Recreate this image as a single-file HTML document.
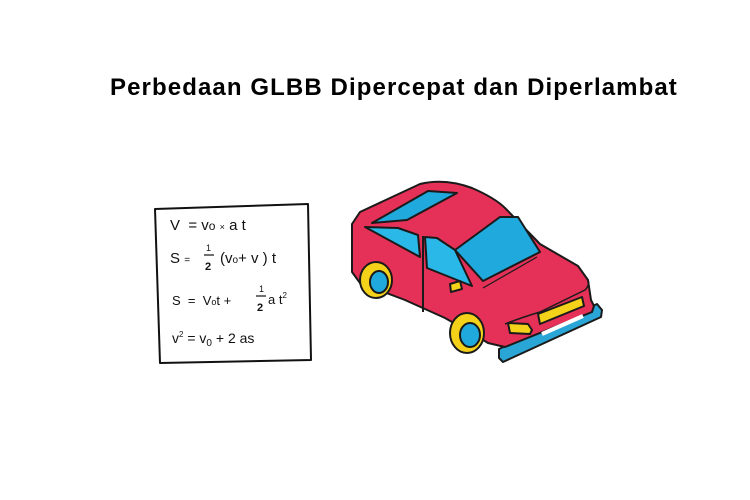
<!DOCTYPE html>
<html><head><meta charset="utf-8"><style>
body{margin:0;width:750px;height:500px;background:#fff;overflow:hidden;position:relative;font-family:"Liberation Sans",sans-serif}
h1{position:absolute;left:110px;top:74px;margin:0;font-size:24px;font-weight:bold;letter-spacing:1.1px;color:#000;white-space:nowrap}
svg{position:absolute;left:0;top:0}
.f{font-family:"Liberation Sans",sans-serif;fill:#111}
</style></head><body>
<h1>Perbedaan GLBB Dipercepat dan Diperlambat</h1>
<svg width="750" height="500" viewBox="0 0 750 500">
<path d="M155 209 L308 204 L311 360 L160 363 Z" fill="#fff" stroke="#111" stroke-width="2" stroke-linejoin="round"/>
<text class="f" x="170" y="230" font-size="15">V&#160; = v<tspan font-size="12">o</tspan> <tspan font-size="9">×</tspan> a t</text>
<text class="f" x="170" y="263" font-size="15">S <tspan font-size="10">=</tspan></text>
<text class="f" x="206" y="251" font-size="9">1</text>
<line x1="204" y1="255" x2="214" y2="255" stroke="#111" stroke-width="1.2"/>
<text class="f" x="205" y="270" font-size="11" font-weight="bold">2</text>
<text class="f" x="220" y="263" font-size="15">(v<tspan font-size="10">o</tspan>+ v ) t</text>
<text class="f" x="172" y="305" font-size="13">S&#160; =&#160; V<tspan font-size="9">o</tspan>t + </text>
<text class="f" x="259" y="292" font-size="9">1</text>
<line x1="256" y1="296" x2="266" y2="296" stroke="#111" stroke-width="1.2"/>
<text class="f" x="257" y="311" font-size="11" font-weight="bold">2</text>
<text class="f" x="268" y="304" font-size="13">a t<tspan font-size="8" dy="-6">2</tspan></text>
<text class="f" x="172" y="343" font-size="14">v<tspan font-size="8" dy="-6">2</tspan><tspan dy="6"> = v</tspan><tspan font-size="10" dy="3">0</tspan><tspan dy="-3"> + 2 as</tspan></text>

<g stroke="#1a1a1a" stroke-width="2" stroke-linejoin="round">
<path d="M499 349 L597 304 L602 310 L601 317 L503 362 L499 358 Z" fill="#2aa6d6"/>
<path d="M352 224 L360 212 L420 184 Q445 178 472 188 Q495 198 505 208 L540 244 L578 266 L588 280 L591 300 L594 306 L592 312 L505 347 L488 343 L475 335 L445 318 L405 300 L360 283 L352 272 Z" fill="#e53157"/>
<path d="M505 324 Q520 318 540 312 L585 290 Q590 285 588 280" fill="none" stroke-width="1.5"/>
<path d="M372 223 L428 191 L457 193 L407 220 Z" fill="#1fa9dd"/>
<path d="M365 227 L398 228 L418 235 L420 257 Z" fill="#2ab8e8"/>
<path d="M425 237 L437 238 L455 250 L472 286 L427 268 Z" fill="#2ab8e8"/>
<path d="M455 250 L500 217 L518 217 L540 252 L483 281 Z" fill="#1fa9dd"/>
<path d="M538 314 L582 297 L584 306 L540 324 Z" fill="#f5d21a"/>
<path d="M542 334 L583 316" fill="none" stroke="#fff" stroke-width="4"/>
<path d="M508 323 L528 324 L532 330 L530 334 L510 333 Z" fill="#f5d21a"/>
<path d="M450 284 L460 281 L462 289 L451 292 Z" fill="#f5d21a"/>
<path d="M423 236 L423 312" fill="none"/>
<path d="M483 288 L537 257" fill="none" stroke-width="1.2"/>
<ellipse cx="376" cy="280" rx="16" ry="18" fill="#f5d21a"/>
<ellipse cx="379" cy="282" rx="9" ry="11" fill="#1fa9dd"/>
<ellipse cx="467" cy="333" rx="17" ry="20" fill="#f5d21a"/>
<ellipse cx="470" cy="335" rx="10" ry="12" fill="#1fa9dd"/>
</g>
</svg>
</body></html>
